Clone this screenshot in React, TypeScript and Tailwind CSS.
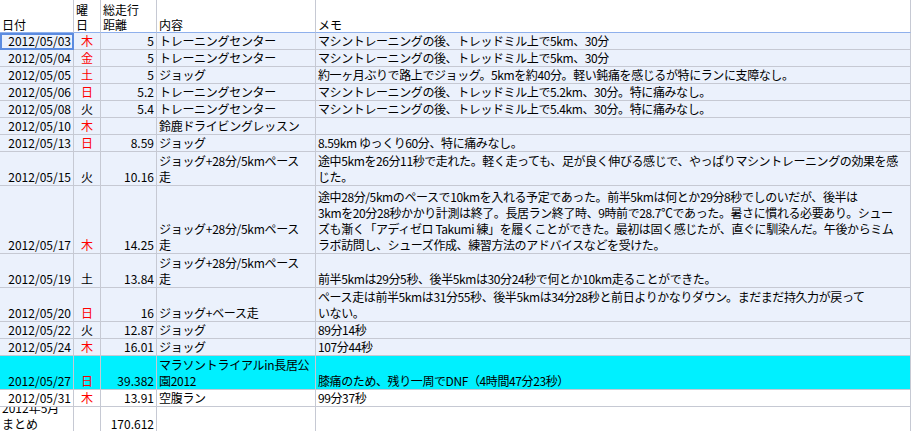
const rows: { d: string; w: string; red: boolean; km: string; c: string[]; m: string[]; h: string; bg: string }[] = [
  { d: "2012/05/03", w: "木", red: true, km: "5", c: ["トレーニングセンター"], m: ["マシントレーニングの後、トレッドミル上で5km、30分"], h: "h-[17px]", bg: "bg-[#ebf1fc]" },
  { d: "2012/05/04", w: "金", red: true, km: "5", c: ["トレーニングセンター"], m: ["マシントレーニングの後、トレッドミル上で5km、30分"], h: "h-[17px]", bg: "bg-[#ebf1fc]" },
  { d: "2012/05/05", w: "土", red: true, km: "5", c: ["ジョッグ"], m: ["約一ヶ月ぶりで路上でジョッグ。5kmを約40分。軽い鈍痛を感じるが特にランに支障なし。"], h: "h-[17px]", bg: "bg-[#ebf1fc]" },
  { d: "2012/05/06", w: "日", red: true, km: "5.2", c: ["トレーニングセンター"], m: ["マシントレーニングの後、トレッドミル上で5.2km、30分。特に痛みなし。"], h: "h-[17px]", bg: "bg-[#ebf1fc]" },
  { d: "2012/05/08", w: "火", red: false, km: "5.4", c: ["トレーニングセンター"], m: ["マシントレーニングの後、トレッドミル上で5.4km、30分。特に痛みなし。"], h: "h-[17px]", bg: "bg-[#ebf1fc]" },
  { d: "2012/05/10", w: "木", red: true, km: "", c: ["鈴鹿ドライビングレッスン"], m: [""], h: "h-[17px]", bg: "bg-[#ebf1fc]" },
  { d: "2012/05/13", w: "日", red: true, km: "8.59", c: ["ジョッグ"], m: ["8.59km ゆっくり60分、特に痛みなし。"], h: "h-[17px]", bg: "bg-[#ebf1fc]" },
  { d: "2012/05/15", w: "火", red: false, km: "10.16", c: ["ジョッグ+28分/5kmペース", "走"], m: ["途中5kmを26分11秒で走れた。軽く走っても、足が良く伸びる感じで、やっぱりマシントレーニングの効果を感", "じた。"], h: "h-[34px]", bg: "bg-[#ebf1fc]" },
  { d: "2012/05/17", w: "木", red: true, km: "14.25", c: ["ジョッグ+28分/5kmペース", "走"], m: ["途中28分/5kmのペースで10kmを入れる予定であった。前半5kmは何とか29分8秒でしのいだが、後半は", "3kmを20分28秒かかり計測は終了。長居ラン終了時、9時前で28.7℃であった。暑さに慣れる必要あり。シュー", "ズも漸く「アディゼロ Takumi 練」を履くことができた。最初は固く感じたが、直ぐに馴染んだ。午後からミム", "ラボ訪問し、シューズ作成、練習方法のアドバイスなどを受けた。"], h: "h-[68px]", bg: "bg-[#ebf1fc]" },
  { d: "2012/05/19", w: "土", red: false, km: "13.84", c: ["ジョッグ+28分/5kmペース", "走"], m: ["前半5kmは29分5秒、後半5kmは30分24秒で何とか10km走ることができた。"], h: "h-[34px]", bg: "bg-[#ebf1fc]" },
  { d: "2012/05/20", w: "日", red: true, km: "16", c: ["ジョッグ+ベース走"], m: ["ペース走は前半5kmは31分55秒、後半5kmは34分28秒と前日よりかなりダウン。まだまだ持久力が戻って", "いない。"], h: "h-[34px]", bg: "bg-[#ebf1fc]" },
  { d: "2012/05/22", w: "火", red: false, km: "12.87", c: ["ジョッグ"], m: ["89分14秒"], h: "h-[17px]", bg: "bg-[#ebf1fc]" },
  { d: "2012/05/24", w: "木", red: true, km: "16.01", c: ["ジョッグ"], m: ["107分44秒"], h: "h-[17px]", bg: "bg-[#ebf1fc]" },
  { d: "2012/05/27", w: "日", red: true, km: "39.382", c: ["マラソントライアルin長居公", "園2012"], m: ["膝痛のため、残り一周でDNF（4時間47分23秒）"], h: "h-[34px]", bg: "bg-[#00f0ff]" },
  { d: "2012/05/31", w: "木", red: true, km: "13.91", c: ["空腹ラン"], m: ["99分37秒"], h: "h-[17px]", bg: "bg-white" },
];

const cell = "border-r border-b border-[#c6c9d3] flex flex-col justify-end overflow-hidden whitespace-nowrap px-[2px] leading-[16px]";
const head = "border-r border-b border-b-[#8fb0ec] border-r-[#c6c9d3] flex flex-col justify-end overflow-hidden whitespace-nowrap px-[2px] leading-[15px] h-[33px]";

export default function App() {
  return (
    <div
      className="w-[916px] h-[431px] overflow-hidden bg-white text-[12px] text-black"
      style={{ fontFamily: '"Noto Sans CJK JP", "Liberation Sans", sans-serif' }}
    >
      <div className="grid grid-cols-[74px_27px_56px_159px_595px_5px]">
        {/* header */}
        <div className={head}>日付</div>
        <div className={head}><div>曜</div><div>日</div></div>
        <div className={head}><div>総走行</div><div>距離</div></div>
        <div className={head}>内容</div>
        <div className={head}>メモ</div>
        <div className="h-[33px]" />

        {rows.map((r, i) => (
          <>
            <div key={`d${i}`} className={`${cell} ${r.h} ${r.bg} items-end ${i === 0 ? "outline-2 -outline-offset-2 outline-[#5b8be0]" : ""}`}>{r.d}</div>
            <div key={`w${i}`} className={`${cell} ${r.h} ${r.bg} items-center ${r.red ? "text-[#ff0000]" : ""}`}>{r.w}</div>
            <div key={`k${i}`} className={`${cell} ${r.h} ${r.bg} items-end`}>{r.km}</div>
            <div key={`c${i}`} className={`${cell} ${r.h} ${r.bg} tracking-[-0.3px]`}>{r.c.map((t, j) => <div key={j}>{t}</div>)}</div>
            <div key={`m${i}`} className={`${cell} ${r.h} ${r.bg} tracking-[-0.4px]`}>{r.m.map((t, j) => <div key={j}>{t}</div>)}</div>
            <div key={`e${i}`} className={`${r.h}`} />
          </>
        ))}

        <div className={`${cell} h-[26px] px-0 leading-[13px]`}><div>2012年5月</div><div>まとめ</div></div>
        <div className={`${cell} h-[26px]`} />
        <div className={`${cell} h-[26px] items-end leading-[13px]`}>170.612</div>
        <div className={`${cell} h-[26px]`} />
        <div className={`${cell} h-[26px]`} />
        <div className="h-[26px]" />
      </div>
    </div>
  );
}
